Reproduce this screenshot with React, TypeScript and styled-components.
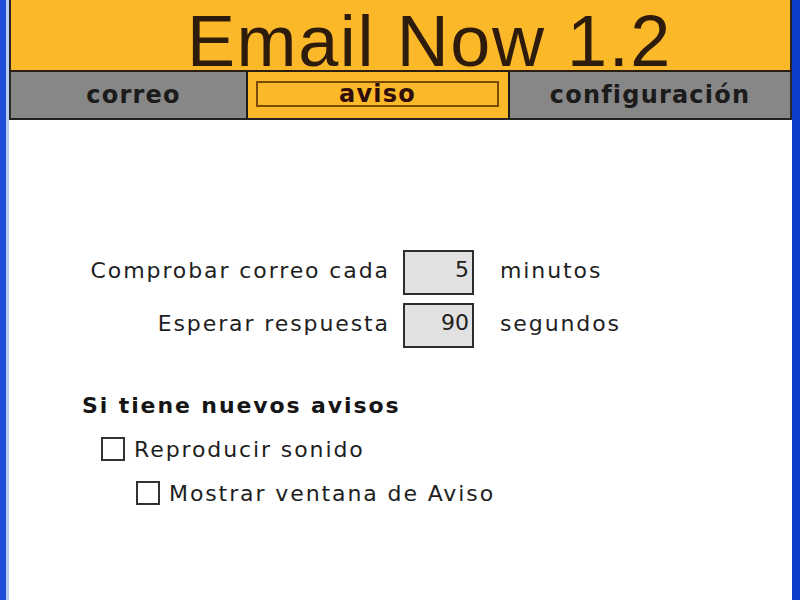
import React from "react";
import styled, { createGlobalStyle } from "styled-components";

const Global = createGlobalStyle`
  html, body { margin: 0; padding: 0; background: #ffffff; }
  body { font-family: "DejaVu Sans", Verdana, sans-serif; }
  * { box-sizing: border-box; }
`;

const Window = styled.div`
  width: 800px;
  height: 600px;
  display: flex;
  flex-direction: column;
  border-left: 6px solid #1d4fd8;
  border-right: 8px solid #0c3ec9;
  padding-left: 3px;
  background: #ffffff;
  box-shadow: inset 3px 0 0 #b9cdf3;
  overflow: hidden;
`;

const Header = styled.div`
  height: 72px;
  flex: none;
  background: #fbb829;
  border-left: 2px solid #2a2320;
  border-right: 2px solid #2a2320;
  border-bottom: 2px solid #2a1d12;
  padding: 13px 0 0 176px;
`;

const Title = styled.h1`
  margin: 0;
  font-family: "Liberation Sans", Arial, sans-serif;
  font-weight: normal;
  font-size: 72px;
  line-height: 57px;
  letter-spacing: 1.6px;
  color: #2d1c0c;
  white-space: nowrap;
`;

const TabBar = styled.div`
  height: 48px;
  flex: none;
  display: flex;
  background: #878787;
  border-left: 2px solid #2a2a2a;
  border-right: 2px solid #2a2a2a;
  border-bottom: 2px solid #222222;
`;

const Tab = styled.div<{ $active?: boolean; $width?: number }>`
  ${(p) => (p.$width ? `width: ${p.$width}px; flex: none;` : "flex: 1;")}
  display: flex;
  align-items: center;
  justify-content: center;
  background: ${(p) => (p.$active ? "#fbb829" : "#878787")};
  ${(p) =>
    p.$active
      ? "border-left: 2px solid #1f1a16; border-right: 2px solid #1f1a16; padding: 9px 9px 11px 8px;"
      : ""}
  font-family: "DejaVu Sans", Verdana, sans-serif;
  font-weight: bold;
  font-size: 24px;
  letter-spacing: 1.2px;
  color: ${(p) => (p.$active ? "#2e0d0c" : "#1b1b1b")};
  padding-left: ${(p) => (p.$width === 235 ? "10px" : p.$active ? "8px" : "0")};
`;

const ActiveFrame = styled.div`
  width: 100%;
  height: 100%;
  border: 2px solid #7b4a06;
  display: flex;
  align-items: center;
  justify-content: center;
`;

const Body = styled.div`
  flex: 1;
  padding-top: 130px;
  color: #1e1e1e;
  font-family: "DejaVu Sans", Verdana, sans-serif;
  font-size: 22px;
  letter-spacing: 1.9px;
`;

const FormGrid = styled.div`
  display: grid;
  grid-template-columns: 381px 71px auto;
  column-gap: 13px;
  row-gap: 8px;
  align-items: center;
`;

const Label = styled.div`
  text-align: right;
  line-height: 28px;
  padding-bottom: 4px;
  white-space: nowrap;
`;

const Unit = styled.div`
  margin-left: 13px;
  line-height: 28px;
  padding-bottom: 4px;
  white-space: nowrap;
`;

const NumBox = styled.input`
  width: 71px;
  height: 45px;
  border: 2px solid #2e2e2e;
  background: #e1e1e1;
  color: #1e1e1e;
  font: inherit;
  letter-spacing: 0;
  text-align: right;
  padding: 0 3px 6px 0;
  margin: 0;
  outline: none;
`;

const Section = styled.div`
  margin: 44px 0 0 73px;
  display: flex;
  flex-direction: column;
`;

const Heading = styled.div`
  font-weight: bold;
  line-height: 28px;
  letter-spacing: 1.9px;
  color: #151515;
`;

const CheckRow = styled.label<{ $indent: number }>`
  height: 44px;
  display: flex;
  align-items: center;
  gap: 9px;
  margin-left: ${(p) => p.$indent}px;
  line-height: 28px;
`;

const FirstRow = styled(CheckRow)`
  margin-top: 8px;
`;

const Box = styled.span`
  width: 24px;
  height: 24px;
  flex: none;
  border: 2px solid #333333;
  background: #ffffff;
  margin-top: -2px;
`;

export default function App() {
  return (
    <>
      <Global />
      <Window>
        <Header>
          <Title>Email Now 1.2</Title>
        </Header>
        <TabBar>
          <Tab $width={235}>correo</Tab>
          <Tab $width={264} $active>
            <ActiveFrame>aviso</ActiveFrame>
          </Tab>
          <Tab>configuración</Tab>
        </TabBar>
        <Body>
          <FormGrid>
            <Label>Comprobar correo cada</Label>
            <NumBox readOnly value="5" />
            <Unit>minutos</Unit>
            <Label>Esperar respuesta</Label>
            <NumBox readOnly value="90" />
            <Unit>segundos</Unit>
          </FormGrid>
          <Section>
            <Heading>Si tiene nuevos avisos</Heading>
            <FirstRow $indent={19}>
              <Box />
              Reproducir sonido
            </FirstRow>
            <CheckRow $indent={54}>
              <Box />
              Mostrar ventana de Aviso
            </CheckRow>
          </Section>
        </Body>
      </Window>
    </>
  );
}
